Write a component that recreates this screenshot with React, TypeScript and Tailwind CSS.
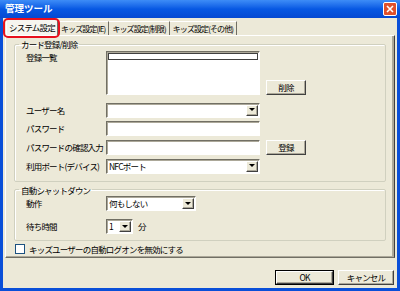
import React from 'react';

const font = { fontFamily: '"Noto Sans CJK JP", "Noto Sans", sans-serif' };

const txt = 'text-[8.5px] tracking-[-0.8px] leading-none whitespace-nowrap';
const tabTxt = 'text-[8px] tracking-[-0.9px] leading-none whitespace-nowrap';

const sunken =
  'bg-white border border-t-[#716f64] border-l-[#716f64] border-b-white border-r-white shadow-[inset_1px_1px_0_#aca899]';
const raised =
  'bg-[#ece9d8] border border-t-white border-l-white border-b-[#404040] border-r-[#404040] shadow-[inset_-1px_-1px_0_#aca899]';

function DropArrow() {
  return (
    <div className={`w-[12px] h-[11px] mr-[1px] flex items-center justify-center ${raised}`}>
      <svg width="6" height="4" viewBox="0 0 6 4">
        <path d="M0 0h6L3 3z" fill="#000" />
      </svg>
    </div>
  );
}

function Select({ width, value }: { width: string; value?: string }) {
  return (
    <div className={`${width} h-[15px] flex items-center ${sunken}`}>
      <span className={`flex-1 pl-[2px] ${txt}`}>{value}</span>
      <DropArrow />
    </div>
  );
}

function Button({ label, width, className = '' }: { label: string; width: string; className?: string }) {
  return (
    <div className={`${width} h-[15px] flex items-center justify-center ${txt} ${raised} ${className}`}>
      {label}
    </div>
  );
}

function Row({ label, children, className = '' }: { label: string; children: React.ReactNode; className?: string }) {
  return (
    <div className={`flex items-center ${className}`}>
      <span className={`w-[80px] ${txt}`}>{label}</span>
      {children}
    </div>
  );
}

export default function App() {
  const tabs = ['キッズ設定(IE)', 'キッズ設定(制限)', 'キッズ設定(その他)'];

  return (
    <div
      style={font}
      className="w-[400px] h-[291px] flex flex-col bg-[#0a4fd8] text-[#000] overflow-hidden"
    >
      {/* Title bar */}
      <div className="h-[18px] flex items-center justify-between pl-[5px] pr-[3px] bg-gradient-to-b from-[#3d8cf7] via-[#0758e3] to-[#0549d2]">
        <span className="text-white text-[9.5px] font-bold leading-none">管理ツール</span>
        <div className="w-[14px] h-[14px] rounded-[2px] border border-white bg-[#e0502c] flex items-center justify-center">
          <svg width="8" height="8" viewBox="0 0 8 8">
            <path d="M1 1L7 7M7 1L1 7" stroke="#fff" strokeWidth="1.6" />
          </svg>
        </div>
      </div>

      {/* Body */}
      <div className="flex-1 mx-[3px] mb-[3px] bg-[#ece9d8] flex flex-col px-[2px] pt-[1px]">
        {/* Tabs */}
        <div className="relative flex items-end h-[16px]">
          <div className={`relative z-10 h-[16px] w-[52px] ml-[1px] flex items-center justify-center bg-[#f6f5ef] border border-b-0 border-t-white border-l-white border-r-[#716f64] ${txt}`}>
            システム設定
          </div>
          {tabs.map((t) => (
            <div
              key={t}
              className={`h-[14px] px-[3px] flex items-center border-r border-r-[#716f64] border-t border-t-white ${tabTxt}`}
            >
              {t}
            </div>
          ))}
          <div className="absolute left-[-2px] top-[-1px] w-[57px] h-[20px] rounded-[5px] border-2 border-[#e8101e] z-20" />
        </div>

        {/* Panel */}
        <div className="h-[223px] border border-t-white border-l-white border-b-[#716f64] border-r-[#404040] shadow-[inset_-2px_-1px_0_#aca899] px-[8px] pt-[4px]">
          <fieldset className="border border-[#d0d0bf] shadow-[inset_1px_1px_0_white] rounded-[2px] px-[11px] pb-[7px] w-[372px]">
            <legend className={`px-[2px] ml-[-7px] ${txt}`}>カード登録/削除</legend>
            <div className="flex items-end mt-[2px]">
              <span className={`w-[80px] self-start mt-[2px] ${txt}`}>登録一覧</span>
              <div className={`w-[154px] h-[44px] p-[1px] ${sunken}`}>
                <div className="h-[7px] border border-[#404040]" />
              </div>
              <Button label="削除" width="w-[40px]" className="ml-[6px]" />
            </div>
            <Row label="ユーザー名" className="mt-[8px]">
              <Select width="w-[154px]" />
            </Row>
            <Row label="パスワード" className="mt-[3px]">
              <div className={`w-[154px] h-[15px] ${sunken}`} />
            </Row>
            <Row label="パスワードの確認入力" className="mt-[4px]">
              <div className={`w-[154px] h-[15px] ${sunken}`} />
              <Button label="登録" width="w-[40px]" className="ml-[6px]" />
            </Row>
            <Row label="利用ポート(デバイス)" className="mt-[4px]">
              <Select width="w-[154px]" value="NFCポート" />
            </Row>
          </fieldset>

          <fieldset className="mt-[4px] border border-[#d0d0bf] shadow-[inset_1px_1px_0_white] rounded-[2px] px-[11px] pb-[6px] w-[372px]">
            <legend className={`px-[2px] ml-[-7px] ${txt}`}>自動シャットダウン</legend>
            <Row label="動作" className="mt-[2px]">
              <Select width="w-[90px]" value="何もしない" />
            </Row>
            <Row label="待ち時間" className="mt-[8px]">
              <Select width="w-[27px]" value="1" />
              <span className={`ml-[5px] ${txt}`}>分</span>
            </Row>
          </fieldset>

          <div className="flex items-center mt-[3px] ml-[1px]">
            <div className="w-[10px] h-[10px] bg-white border border-[#1c5180]" />
            <span className={`ml-[4px] ${txt}`}>キッズユーザーの自動ログオンを無効にする</span>
          </div>
        </div>

        {/* Footer buttons */}
        <div className="flex justify-end gap-[4px] mt-[12px] pr-[1px]">
          <div className="w-[59px] h-[15px] border border-black p-0">
            <Button label="OK" width="w-full" className="h-full" />
          </div>
          <Button label="キャンセル" width="w-[56px]" />
        </div>
      </div>
    </div>
  );
}
